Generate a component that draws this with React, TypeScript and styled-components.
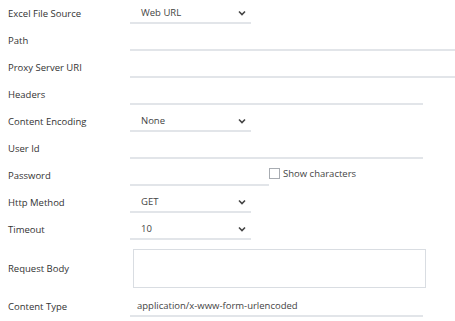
import styled, { createGlobalStyle } from "styled-components";

const GlobalStyle = createGlobalStyle`
  body {
    margin: 0;
    background: #ffffff;
    font-family: "Open Sans", "Liberation Sans", sans-serif;
    color: #333333;
  }
`;

const Form = styled.div`
  width: 455px;
  display: flex;
  flex-direction: column;
`;

const Row = styled.div<{ tall?: boolean }>`
  display: grid;
  grid-template-columns: 130px 1fr;
  align-items: center;
  height: ${(p) => (p.tall ? "50px" : "27px")};
`;

const Label = styled.div`
  padding-left: 8px;
  font-size: 9.5px;
  color: #333333;
`;

const Cell = styled.div`
  display: flex;
  align-items: center;
`;

const Field = styled.div<{ w: number; pad?: number }>`
  box-sizing: border-box;
  width: ${(p) => p.w}px;
  height: 20px;
  display: flex;
  align-items: center;
  justify-content: space-between;
  padding: 0 5px 0 ${(p) => p.pad ?? 11}px;
  border-bottom: 2px solid #e2e5e9;
  font-size: 9.5px;
  color: #444444;
`;

const Chevron = styled.svg`
  width: 8px;
  height: 6px;
`;

const TextArea = styled.div`
  box-sizing: border-box;
  margin-left: 3px;
  width: 293px;
  height: 39px;
  border: 1px solid #d9dde2;
`;

const Check = styled.span`
  box-sizing: border-box;
  width: 11px;
  height: 11px;
  margin-top: -4px;
  border: 1px solid #a8acb2;
  background: #fff;
`;

const CheckText = styled.span`
  margin-left: 3px;
  margin-top: -4px;
  font-size: 9.5px;
  color: #444444;
`;

const Select = ({ value }: { value: string }) => (
  <Field w={121}>
    <span>{value}</span>
    <Chevron viewBox="0 0 8 6">
      <path d="M1 1.5 L4 4.5 L7 1.5" fill="none" stroke="#444" strokeWidth="1.6" />
    </Chevron>
  </Field>
);

const App = () => {
  return (
    <>
      <GlobalStyle />
      <Form>
        <Row>
          <Label>Excel File Source</Label>
          <Cell>
            <Select value="Web URL" />
          </Cell>
        </Row>
        <Row>
          <Label>Path</Label>
          <Cell>
            <Field w={325} />
          </Cell>
        </Row>
        <Row>
          <Label>Proxy Server URI</Label>
          <Cell>
            <Field w={325} />
          </Cell>
        </Row>
        <Row>
          <Label>Headers</Label>
          <Cell>
            <Field w={293} />
          </Cell>
        </Row>
        <Row>
          <Label>Content Encoding</Label>
          <Cell>
            <Select value="None" />
          </Cell>
        </Row>
        <Row>
          <Label>User Id</Label>
          <Cell>
            <Field w={293} />
          </Cell>
        </Row>
        <Row>
          <Label>Password</Label>
          <Cell>
            <Field w={139} />
            <Check />
            <CheckText>Show characters</CheckText>
          </Cell>
        </Row>
        <Row>
          <Label>Http Method</Label>
          <Cell>
            <Select value="GET" />
          </Cell>
        </Row>
        <Row>
          <Label>Timeout</Label>
          <Cell>
            <Select value="10" />
          </Cell>
        </Row>
        <Row tall>
          <Label>Request Body</Label>
          <Cell>
            <TextArea />
          </Cell>
        </Row>
        <Row>
          <Label>Content Type</Label>
          <Cell>
            <Field w={293} pad={7}>
              application/x-www-form-urlencoded
            </Field>
          </Cell>
        </Row>
      </Form>
    </>
  );
};

export default App;
